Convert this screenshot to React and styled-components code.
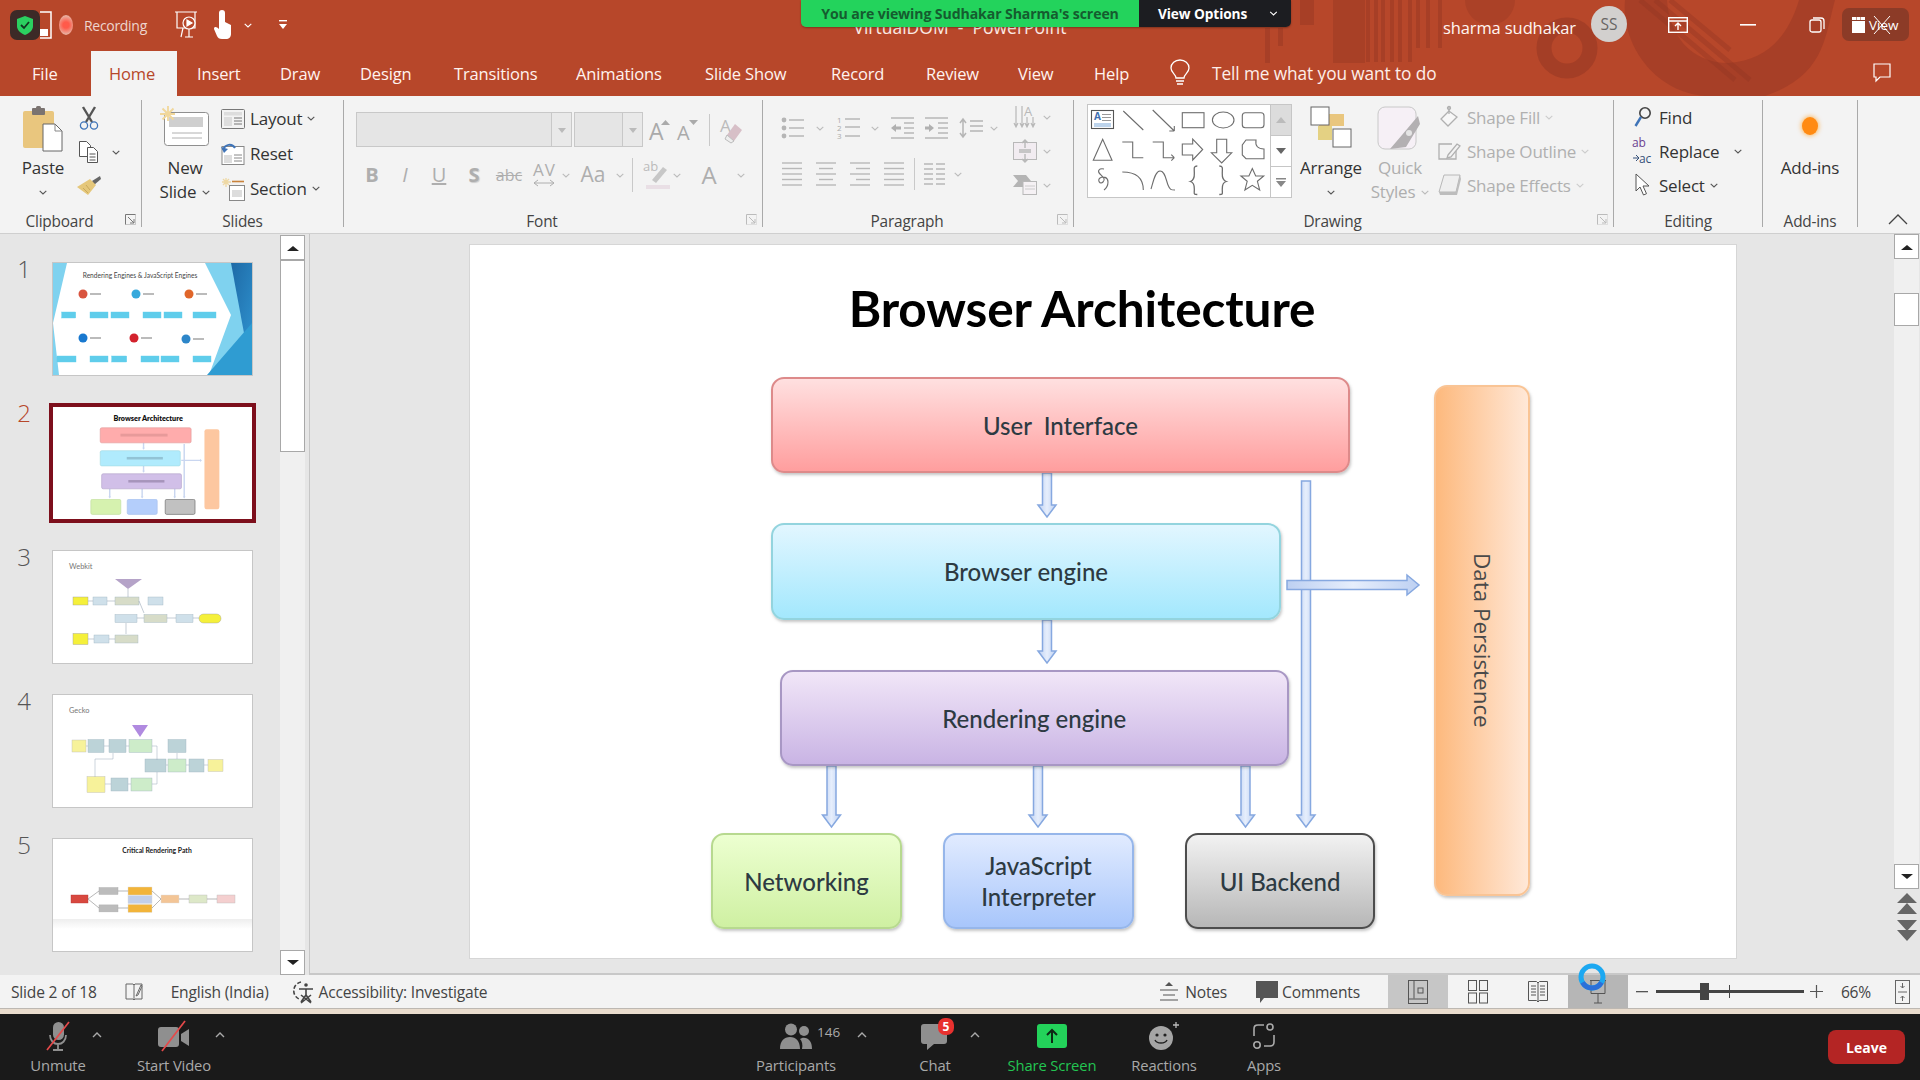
import React from "react";
import styled, { createGlobalStyle } from "styled-components";

const UI = `"Open Sans", "Noto Sans", "Liberation Sans", sans-serif`;
const SLIDE = `Lato, "Open Sans", sans-serif`;

const Global = createGlobalStyle`
  html, body { margin: 0; padding: 0; background: #e6e6e6; overflow: hidden; }
  * { box-sizing: border-box; }
  svg { display: block; overflow: visible; }
`;

const Page = styled.div`
  position: relative; width: 1920px; height: 1080px; display: flex; flex-direction: column;
  font-family: ${UI}; overflow: hidden; color: #333;
`;

/* ---------- title area ---------- */
const Chrome = styled.header`
  position: relative; height: 96px; background: #b7472a; color: #fff; flex: none; overflow: hidden;
`;
const Pattern = styled.svg`position: absolute; left: 0; top: 0;`;
const TitleRow = styled.div`
  position: relative; height: 50px; display: flex; align-items: center;
`;
const QuickAccess = styled.div`display: flex; align-items: center; width: 720px;`;
const DocTitle = styled.div`
  width: 480px; text-align: center; font-size: 17.5px; white-space: pre; padding-top: 4px; color: #fbe9e4;
`;
const Account = styled.div`display: flex; align-items: center; margin-left: auto; height: 50px;`;
const UserName = styled.span`font-size: 16.5px; letter-spacing: -.1px; margin-right: 15px; padding-top: 4px; color: #fff6f2;`;
const Avatar = styled.span`
  width: 36px; height: 36px; border-radius: 50%; background: #d2d0ce; color: #686664; font-size: 15.5px;
  display: flex; align-items: center; justify-content: center; margin-right: 41px; margin-bottom: 2px;
`;
const Recording = styled.span`
  font-size: 14px; letter-spacing: -.3px; color: rgba(255,255,255,.78); margin-left: 11px; width: 60px; margin-right: 31px;
`;
const RecDot = styled.span`
  width: 14px; height: 20px; border-radius: 50%; background: radial-gradient(circle, #ff5a4a 25%, #e9b0a0 75%);
  margin-left: 7px; flex: none;
`;
const TabRow = styled.nav`
  position: relative; height: 46px; display: flex; align-items: flex-end; padding-left: 32px;
`;
const Tab = styled.div`
  height: 45px; width: ${p => p.$w}px; font-size: 16.5px; letter-spacing: -.15px; line-height: 46px; flex: none;
  margin-left: ${p => p.$ml || 0}px; padding-left: ${p => p.$pl || 0}px;
  background: ${p => (p.$active ? "#f3f3f3" : "transparent")};
  color: ${p => (p.$active ? "#b7472a" : "#fff3ef")};
`;
const TellMe = styled.div`
  font-size: 17.3px; letter-spacing: -.1px; line-height: 46px; height: 45px; margin-left: 22px; color: #fdeee9; white-space: nowrap;
`;
const Bulb = styled.svg`align-self: center;`;
const CommentBtn = styled.svg`margin-left: auto; margin-right: 29px; align-self: center;`;

const Banner = styled.div`
  position: absolute; left: 801px; top: 0; height: 27px; width: 490px; display: flex; z-index: 5;
  border-radius: 0 0 5px 5px; overflow: hidden; box-shadow: 0 1px 2px rgba(0,0,0,.3); font-size: 14.1px; font-weight: 700;
`;
const BannerMsg = styled.div`
  width: 338px; background: #23d35c; color: #155c2f; display: flex; align-items: center; justify-content: center; letter-spacing: -.1px; white-space: nowrap;
`;
const BannerOptions = styled.div`
  flex: 1; background: #1c1d21; color: #fff; display: flex; align-items: center; padding-left: 19px; font-size: 13.7px; gap: 22px; letter-spacing: -.1px; white-space: nowrap;
`;
const ShieldBadge = styled.div`
  position: absolute; left: 10px; top: 10px; width: 30px; height: 30px; border-radius: 7px; background: #3d2a27;
  display: flex; align-items: center; justify-content: center; z-index: 5;
`;
const ViewBadge = styled.div`
  position: absolute; left: 1842px; top: 8px; width: 67px; height: 33px; border-radius: 7px; background: rgba(70,40,35,.38);
  display: flex; align-items: center; padding-left: 10px; gap: 4px; font-size: 13.5px; color: #fff; z-index: 5;
`;

/* ---------- ribbon ---------- */
const Ribbon = styled.section`
  height: 138px; flex: none; background: #f3f3f3; border-bottom: 1px solid #cfcfcf; padding-top: 4px; display: flex; align-items: flex-start;
`;
const Group = styled.div`
  width: ${p => p.$w}px; height: 127px; border-right: 1px solid #a9a9a9; display: flex; flex-direction: column; flex: none;
`;
const GroupBody = styled.div`
  height: 111px; display: flex; padding-left: ${p => p.$pl || 0}px; align-items: flex-start;
`;
const GroupFoot = styled.div`height: 16px; display: flex; position: relative; padding-right: ${p => (p.$launcher ? 22 : 0)}px;`;
const GroupLabel = styled.div`
  flex: 1; text-align: center; font-size: 15.4px; letter-spacing: -.2px; line-height: 22px; color: #444; height: 22px;
`;
const Launcher = styled.svg`position: absolute; right: 5px; top: 3px;`;

const BigButton = styled.div`
  width: ${p => p.$w}px; margin-left: ${p => p.$ml || 0}px; display: flex; flex-direction: column; align-items: center; padding-top: 6px;
  color: ${p => (p.$off ? "#aeaeae" : "#333")}; flex: none;
`;
const BigIcon = styled.div`height: 50px; display: flex; align-items: flex-start; justify-content: center;`;
const BigLine = styled.div`
  height: 24px; line-height: 24px; font-size: 17px; letter-spacing: -.2px; display: flex; align-items: center; gap: 6px; white-space: nowrap;
`;
const MiniCol = styled.div`
  display: flex; flex-direction: column; padding-top: ${p => p.$pt || 0}px; margin-left: ${p => p.$ml || 0}px; flex: none;
`;
const MiniRow = styled.div`
  height: ${p => p.$h || 34}px; display: flex; align-items: center; gap: ${p => p.$gap ?? 5}px; font-size: 17px; letter-spacing: -.2px;
  color: ${p => (p.$off ? "#b0b0b0" : "#333")}; white-space: nowrap;
`;
const MiniIcon = styled.span`width: ${p => p.$w || 24}px; display: flex; justify-content: center; flex: none;`;

const FontCol = styled.div`padding-top: 12px; display: flex; flex-direction: column; width: 100%;`;
const FontRowA = styled.div`height: 35px; display: flex; align-items: center;`;
const FontRowB = styled.div`height: 36px; margin-top: 10px; display: flex; align-items: center; color: #aeaeae;`;
const Combo = styled.div`
  width: ${p => p.$w}px; height: 35px; background: #e5e5e5; border: 1px solid #c8c8c8; margin-right: 2px; display: flex; justify-content: flex-end;
`;
const ComboBtn = styled.div`
  width: 20px; border-left: 1px solid #c8c8c8; display: flex; align-items: center; justify-content: center; background: #e9e9e9;
  &::before { content: ""; border: 4px solid transparent; border-top: 5px solid #bbb; margin-top: 5px; }
`;
const FontCell = styled.div`
  width: ${p => p.$w}px; display: flex; justify-content: center; align-items: center; font-size: ${p => p.$fs || 20}px; line-height: 1.3;
  font-weight: ${p => (p.$bold ? 700 : 400)}; font-style: ${p => (p.$italic ? "italic" : "normal")};
  text-decoration: ${p => p.$deco || "none"}; text-shadow: ${p => (p.$shadow ? "1px 1px 1px #ccc" : "none")}; flex: none;
`;
const VRule = styled.div`width: 1px; height: ${p => p.$h}px; background: #c9c9c9; margin: 0 ${p => p.$m || 0}px; flex: none;`;
const ParaCol = styled.div`display: flex; flex-direction: column; padding-top: 10px; flex: none; width: 250px;`;
const ParaRow = styled.div`display: flex; align-items: center; height: 36px; margin-bottom: ${p => p.$mb || 0}px;`;
const ParaIcon = styled.span`
  width: ${p => p.$w}px; margin-left: ${p => p.$ml || 0}px; display: flex; justify-content: center; flex: none;
`;

const Gallery = styled.div`
  width: 205px; height: 94px; margin-top: 4px; margin-left: 13px; background: #fff; border: 1px solid #c6c6c6; display: flex; flex: none;
`;
const GalleryShapes = styled.svg`flex: none;`;
const GalleryScroll = styled.div`width: 22px; border-left: 1px solid #c6c6c6; display: flex; flex-direction: column;`;
const GalleryBtn = styled.div`
  height: 31px; flex: 1; background: ${p => (p.$gray ? "#dcdcdc" : "#fff")}; border-bottom: ${p => (p.$last ? 0 : 1)}px solid #c6c6c6;
  display: flex; align-items: center; justify-content: center;
`;
const Collapse = styled.div`flex: 1; display: flex; justify-content: flex-end; align-items: flex-end; height: 127px; padding: 0 12px 2px 0;`;
const AddinDot = styled.span`
  width: 16px; height: 18px; margin-top: 11px; border-radius: 50%; background: #ff8a12; box-shadow: 0 0 4px 1px rgba(255,170,60,.75);
`;

/* ---------- main ---------- */
const Main = styled.main`
  height: 741px; flex: none; display: flex; background: #e6e6e6; position: relative;
`;
const ThumbPane = styled.div`
  width: 280px; display: flex; flex-direction: column; gap: 32px; padding-top: 29px; flex: none;
`;
const ThumbRow = styled.div`display: flex; height: 112px;`;
const ThumbNum = styled.div`
  width: 53px; padding-right: 5px; text-align: center; font-size: 24px; line-height: 26px; font-weight: 300; margin-top: -7px;
  color: ${p => (p.$sel ? "#b7472a" : "#555")};
`;
const Thumb = styled.div`
  width: 199px; height: 112px; background: #fff; outline: ${p => (p.$sel ? "4px solid #7d0f1c" : "1px solid #c6c6c6")};
  overflow: hidden;
`;
const VScroll = styled.div`
  width: 25px; flex: none; background: #f0f0f0; display: flex; flex-direction: column; margin-top: 1px; height: 740px;
`;
const ScrollBtn = styled.div`
  height: 25px; flex: none; background: #fff; border: 1px solid #a8a8a8; display: flex; align-items: center; justify-content: center;
  &::before {
    content: ""; border: 6px solid transparent;
    ${p => (p.$down ? "border-top: 5px solid #222; margin-top: 5px;" : "border-bottom: 5px solid #222; margin-bottom: 5px;")}
  }
`;
const ScrollThumb = styled.div`
  height: ${p => p.$h}px; margin-top: ${p => p.$mt || 0}px; background: #fff; border: 1px solid #a8a8a8; flex: none;
`;
const ScrollFill = styled.div`flex: 1;`;
const Editor = styled.div`
  flex: 1; display: flex; margin-left: 4px; border-left: 1px solid #c6c6c6; border-bottom: 2px solid #c8c8c8; position: relative;
`;
const SlideArea = styled.div`flex: 1; padding: 10px 0 0 159px;`;
const Slide = styled.div`
  position: relative; width: 1268px; height: 715px; background: #fff; border: 1px solid #d6d6d6; overflow: hidden; color: #333;
`;
const SlideTitle = styled.h1`
  position: absolute; left: 0; width: 1224px; top: 33px; margin: 0; text-align: center; font: 700 49.5px/60px ${SLIDE}; color: #000; letter-spacing: -.1px;
`;
const Node = styled.div`
  position: absolute; left: ${p => p.$x}px; top: ${p => p.$y}px; width: ${p => p.$w}px; height: ${p => p.$h}px;
  border-radius: 13px; border: 2px solid ${p => p.$bd}; background: linear-gradient(${p => p.$dir || "180deg"}, ${p => p.$a}, ${p => p.$b});
  box-shadow: 1px 2px 3px rgba(90,90,90,.35); display: flex; align-items: center; justify-content: center; text-align: center;
  font: 500 24px/31px ${SLIDE}; color: #2d3a42;
`;
const NodeText = styled.span`white-space: pre;`;
const Rotated = styled.span`
  writing-mode: vertical-rl; font: 400 22.4px/1 ${UI}; color: #4a4a4a;
`;
const ArrowLayer = styled.svg`position: absolute; left: 0; top: 0;`;

const RightScroll = styled.div`
  width: 25px; flex: none; margin-right: 1px; display: flex; flex-direction: column; background: #f0f0f0; height: 739px; position: relative;
`;
const NavPager = styled.div`
  background: #e6e6e6; height: 84px; flex: none; display: flex; flex-direction: column; align-items: center; padding-top: 3px; gap: 2px;
`;

/* ---------- status ---------- */
const Status = styled.footer`
  height: 33px; flex: none; background: #f3f3f3; display: flex; align-items: stretch; font-size: 15.6px; letter-spacing: -.2px; color: #444;
`;
const StatusLeft = styled.div`flex: 1; display: flex; align-items: stretch; padding-right: 28px;`;
const StatusText = styled.span`display: flex; align-items: center; margin-left: ${p => p.$ml || 0}px; white-space: nowrap;`;
const StatusIcon = styled.span`display: flex; align-items: center; margin-left: ${p => p.$auto ? "auto" : `${p.$ml || 0}px`};`;
const ViewBtn = styled.div`
  width: 60px; flex: none; display: flex; align-items: center; justify-content: center; background: ${p => p.$bg || "transparent"};
`;
const SliderTrack = styled.div`
  position: relative; width: 148px; height: 3px; background: #444; align-self: center; margin-left: 8px; flex: none;
`;
const SliderKnob = styled.span`
  position: absolute; left: 44px; top: -7px; width: 9px; height: 17px; background: #444;
`;
const SliderTick = styled.span`
  position: absolute; left: 73px; top: -5px; width: 1px; height: 13px; background: #444;
`;
const Strip = styled.div`
  height: 6px; flex: none; background: #e9dccd; border-top: 1px solid #bdb8b2;
`;
const RingWrap = styled.svg`position: absolute; left: 1578px; top: 963px; z-index: 6;`;

/* ---------- meeting bar ---------- */
const MeetBar = styled.div`
  height: 66px; flex: none; background: #1a1a1a; display: flex; align-items: flex-start;
`;
const MeetItem = styled.div`
  position: relative; width: ${p => p.$w}px; margin-left: ${p => p.$ml || 0}px; flex: none; display: flex; flex-direction: column; align-items: center; padding-top: 6px;
`;
const MeetIcon = styled.div`height: 32px; display: flex; align-items: center; justify-content: center;`;
const MeetLabel = styled.div`
  margin-top: 3px; line-height: 20px; font-size: 14.8px; letter-spacing: -.15px; white-space: nowrap; color: ${p => (p.$green ? "#23c552" : "#a9a9a9")};
`;
const Caret = styled.svg`margin-left: ${p => p.$ml || 0}px; margin-top: 18px; flex: none;`;
const Count = styled.span`position: absolute; left: 71px; top: 9px; font-size: 13.5px; color: #aaa;`;
const ChatBadge = styled.span`
  position: absolute; left: 33px; top: 4px; width: 16px; height: 17px; border-radius: 7px; background: #e8312f; color: #fff; font-size: 12px; font-weight: 700;
  display: flex; align-items: center; justify-content: center;
`;
const LeaveBtn = styled.div`
  margin: 16px 15px 0 auto; width: 77px; height: 34px; border-radius: 8px; background: #b42524; color: #fff; font-weight: 700; font-size: 14px;
  display: flex; align-items: center; justify-content: center;
`;

/* ---------- icons ---------- */
const Chevron = ({ c = "#555", w = 8 }) => (
  <svg width={w} height="5" viewBox="0 0 8 5"><path d="M.7.8 4 4l3.3-3.2" fill="none" stroke={c} strokeWidth="1.1" /></svg>
);
const LauncherIcon = ({ c = "#777" }) => (
  <Launcher width="11" height="11" viewBox="0 0 11 11"><path d="M.5 10.5V.5h10M3 3l6 6M9 5v4H5" fill="none" stroke={c} /><path d="M10.5 .5v10h-10" fill="none" stroke={c} opacity=".35" /></Launcher>
);
const PasteIcon = () => (
  <svg width="42" height="46" viewBox="0 0 42 46">
    <rect x="1" y="5" width="31" height="37" rx="2" fill="#e9c67e" />
    <rect x="10" y="2" width="13" height="7" rx="1" fill="#7a7370" /><rect x="14" y="0" width="5" height="4" rx="1.5" fill="#7a7370" />
    <path d="M21 18h12l7 7v20H21z" fill="#fff" stroke="#666" /><path d="M33 18v7h7" fill="none" stroke="#888" />
  </svg>
);
const Scissors = () => (
  <svg width="22" height="24" viewBox="0 0 22 24" fill="none">
    <path d="M5 1l9 15M17 1 8 16" stroke="#555" strokeWidth="2.4" />
    <circle cx="6" cy="19.5" r="3.6" stroke="#3f74b8" strokeWidth="1.3" /><circle cx="16" cy="19.5" r="3.6" stroke="#3f74b8" strokeWidth="1.3" />
  </svg>
);
const CopyIcon = () => (
  <svg width="22" height="24" viewBox="0 0 22 24" fill="#fff" stroke="#555">
    <path d="M1.5 1.5h7l4 4v11h-11z" /><path d="M9.5 7.5h6l4 4v11h-10z" /><path d="M11.5 14h6M11.5 17h6M11.5 20h6" />
  </svg>
);
const BrushIcon = () => (
  <svg width="24" height="20" viewBox="0 0 24 20">
    <path d="M15 5 23 0l1 3-7 6z" fill="#666" /><path d="M13 3 19 9 11 19 0 11z" fill="#e5c77a" /><path d="M6 12l5 5M9 9l4 5" stroke="#c9a95c" />
  </svg>
);
const NewSlideIcon = () => (
  <svg width="50" height="46" viewBox="0 0 50 46">
    <rect x="4.5" y="6.5" width="44" height="33" rx="3" fill="#fff" stroke="#8f8f8f" />
    <rect x="9" y="11" width="34" height="10" fill="#cfcfcf" /><path d="M12 27h30M12 32h30" stroke="#b0b0b0" />
    <path d="M8 0v15M0 8h15M2.5 2.5l11 11M13.5 2.5l-11 11" stroke="#f1d79a" strokeWidth="1.8" />
  </svg>
);
const LayoutIcon = () => (
  <svg width="24" height="20" viewBox="0 0 24 20" fill="none" stroke="#777">
    <rect x=".5" y=".5" width="23" height="19" rx="1" /><rect x="3" y="3" width="18" height="3.5" fill="#ddd" stroke="none" />
    <rect x="3" y="8" width="8" height="9" fill="#ddd" stroke="none" /><path d="M13 9h8M13 12h8M13 15h8" />
  </svg>
);
const ResetIcon = () => (
  <svg width="24" height="22" viewBox="0 0 24 22" fill="none">
    <rect x="1" y="3.5" width="22" height="18" fill="#fff" stroke="#888" /><rect x="3" y="12" width="8" height="8" fill="#ddd" /><path d="M13 12h8M13 15h8M13 18h8" stroke="#888" />
    <path d="M2 7c2-6 9-7 12-2" stroke="#3f74b8" strokeWidth="2" /><path d="M0 4l3 6 4-4z" fill="#3f74b8" />
  </svg>
);
const SectionIcon = () => (
  <svg width="24" height="24" viewBox="0 0 24 24" fill="none">
    <path d="M5 1v9M1 5h9M2 2l6 6M8 2 2 8" stroke="#eed8a4" strokeWidth="1.3" /><path d="M11 4.5h12" stroke="#c9823b" strokeWidth="1.6" />
    <rect x="8.5" y="8.5" width="15" height="15" stroke="#888" fill="#fff" /><rect x="11" y="13" width="10" height="7" fill="#ddd" />
  </svg>
);
const FontGrow = ({ shrink }) => (
  <svg width="22" height="26" viewBox="0 0 22 26">
    <text x="0" y="23" fontFamily={UI} fontSize={shrink ? 20 : 23} fill="#aaa">A</text>
    <path d={shrink ? "M12 3h9l-4.5 5z" : "M12 8h9L16.5 3z"} fill="#aaa" />
  </svg>
);
const ClearFmt = () => (
  <svg width="24" height="30" viewBox="0 0 24 30">
    <text x="1" y="17" fontFamily={UI} fontSize="17" fill="#bbb">A</text>
    <path d="M16 9l7 6-8 11-7-6z" fill="#d7bfc7" /><path d="M8 20l7 6-3 2-6-4z" fill="#eee" stroke="#bbb" />
  </svg>
);
const SpacingIcon = () => (
  <svg width="24" height="28" viewBox="0 0 24 28">
    <text x="1" y="15" fontFamily={UI} fontSize="17" fill="#aeaeae" textLength="22">AV</text>
    <path d="M2 22h20M6 19l-4 3 4 3M18 19l4 3-4 3" fill="none" stroke="#aeaeae" />
  </svg>
);
const HighlightIcon = () => (
  <svg width="28" height="30" viewBox="0 0 28 30">
    <text x="0" y="11" fontFamily={UI} fontSize="13" fill="#bbb">ab</text>
    <path d="M20 7 24 10 13 23 9 20z" fill="#c7c7c7" /><rect x="3" y="25" width="24" height="4" fill="#e9dfe5" />
  </svg>
);
const Lines = ({ w = 22, h = 22, ws = [1, 1, 1, 1, 1], align = "left" }) => {
  const gap = h / (ws.length - 1 || 1);
  return (
    <svg width={w} height={h + 2} viewBox={`0 0 ${w} ${h + 2}`} stroke="#b8b8b8" strokeWidth="1.4">
      {ws.map((f, i) => {
        const len = w * f;
        const x = align === "center" ? (w - len) / 2 : align === "right" ? w - len : 0;
        return <line key={i} x1={x} x2={x + len} y1={1 + i * gap} y2={1 + i * gap} />;
      })}
    </svg>
  );
};
const Bullets = () => (
  <svg width="24" height="22" viewBox="0 0 24 22" stroke="#b8b8b8" strokeWidth="1.4" fill="#b5b5b5">
    <circle cx="3" cy="3" r="2.4" stroke="none" /><circle cx="3" cy="11" r="2.4" stroke="none" /><circle cx="3" cy="19" r="2.4" stroke="none" />
    <path d="M8 3h15M8 11h15M8 19h15" fill="none" />
  </svg>
);
const Numbered = () => (
  <svg width="24" height="24" viewBox="0 0 24 24" stroke="#b8b8b8" strokeWidth="1.4">
    <path d="M9 3h15M9 11h15M9 20h15" fill="none" />
    <g fontFamily={UI} fontSize="8" fill="#aaa" stroke="none"><text x="1" y="7">1</text><text x="1" y="15">2</text><text x="1" y="23">3</text></g>
  </svg>
);
const IndentIcon = ({ dir }) => (
  <svg width="23" height="22" viewBox="0 0 23 22" stroke="#b8b8b8" strokeWidth="1.4">
    <path d="M0 1h23M13 6h10M13 11h10M13 16h10M0 21h23" />
    <path d={dir === "in" ? "M9 11 4 7v2.5H0v3h4V15z" : "M0 11l5-4v2.5h5v3H5V15z"} fill="#b0b0b0" stroke="none" />
  </svg>
);
const LineSpacing = () => (
  <svg width="24" height="24" viewBox="0 0 24 24" stroke="#b5b5b5" strokeWidth="1.5" fill="none">
    <path d="M4 4v16M1 7l3-4 3 4M1 17l3 4 3-4M11 5h13M11 10h13M11 15h13" />
  </svg>
);
const TextDir = () => (
  <svg width="24" height="24" viewBox="0 0 24 24" fill="none" stroke="#b8b8b8" strokeWidth="1.2">
    <path d="M3 1v20M1 18l2 4 2-4M9 1v20M7 18l2 4 2-4M14 12v9M12 18l2 4 2-4M20 12v9M18 18l2 4 2-4" />
    <text x="11" y="11" fontFamily={UI} fontSize="13" fill="#b8b8b8" stroke="none">A</text>
  </svg>
);
const AlignText = () => (
  <svg width="24" height="24" viewBox="0 0 24 24" fill="none" stroke="#b8b8b8">
    <rect x=".5" y="3.5" width="23" height="17" fill="#f2ecf1" /><path d="M12 1v8M9 4l3-3 3 3M12 23v-8M9 20l3 3 3-3M6 11h12M6 13h12" strokeWidth="1.4" />
  </svg>
);
const SmartArt = () => (
  <svg width="24" height="20" viewBox="0 0 24 20">
    <path d="M0 0h13l5 6-5 6H0l5-6z" fill="#b4b4b4" /><rect x="10" y="6.5" width="13.5" height="13" fill="#f5f1f4" stroke="#b8b8b8" /><path d="M12 11h10M12 14h10" stroke="#ccc" />
  </svg>
);
const ArrangeIcon = () => (
  <svg width="42" height="42" viewBox="0 0 42 42">
    <rect x="9" y="8" width="25" height="12" fill="#e9c67e" /><rect x="8" y="20" width="14" height="14" fill="#e4d183" />
    <rect x="1" y="1" width="18" height="18" fill="#fff" stroke="#666" /><rect x="23" y="23" width="18" height="18" fill="#fff" stroke="#666" />
  </svg>
);
const QuickIcon = () => (
  <svg width="46" height="46" viewBox="0 0 46 46">
    <rect x="1" y="1" width="38" height="42" rx="7" fill="#f6f0f6" stroke="#c8c8c8" />
    <path d="M13 43l12-14 16-19 2 8-14 23z" fill="#b3b0b2" /><circle cx="32" cy="27" r="3" fill="#e5e5e5" />
  </svg>
);
const FindIcon = () => (
  <svg width="18" height="22" viewBox="0 0 18 22" fill="none">
    <circle cx="11" cy="7" r="5.2" stroke="#444" strokeWidth="1.6" /><path d="M7 11 1.5 20" stroke="#3f74b8" strokeWidth="2.4" />
  </svg>
);
const ReplaceIcon = () => (
  <svg width="22" height="28" viewBox="0 0 22 28">
    <text x="0" y="10" fontFamily={UI} fontSize="12" fill="#6b3f90">ab</text><text x="7" y="26" fontFamily={UI} fontSize="12" fill="#36517a">ac</text>
    <path d="M1 21h5M4 18l3 3-3 3" stroke="#36517a" fill="none" />
  </svg>
);
const CursorIcon = () => (
  <svg width="18" height="24" viewBox="0 0 18 24"><path d="M2 1v17l4-4 3.5 8 3-1.3L9 13h6z" fill="#fff" stroke="#555" /></svg>
);
const FillIcon = () => (
  <svg width="20" height="22" viewBox="0 0 20 22" fill="none" stroke="#b0b0b0" strokeWidth="1.3">
    <path d="M9 5 1 13l7 7 9-9z" fill="#f7f7f7" /><path d="M9 1v7" /><circle cx="9" cy="2" r="1.5" />
  </svg>
);
const OutlineIcon = () => (
  <svg width="24" height="20" viewBox="0 0 24 20" fill="none" stroke="#b0b0b0" strokeWidth="1.3">
    <path d="M14 3H1v15h17v-8" /><path d="M10 14l9-11 3 2-9 11-4 1z" fill="#f3f3f3" />
  </svg>
);
const EffectsIcon = () => (
  <svg width="24" height="22" viewBox="0 0 24 22">
    <path d="M6 1h16l-4 17H1z" fill="#efefef" stroke="#b8b8b8" /><path d="M1 18h17l4-17 1 4-4 16H2z" fill="#bdbdbd" />
  </svg>
);

const shapesPath = (
  <g fill="none" stroke="#6d6d6d" strokeWidth="1.1">
    <rect x="3.500" y="5.500" width="22" height="18" stroke="#555" /><path d="M14 9.500h9M14 12.500h9M14 15.500h9" stroke="#999" /><path d="M6 19h17M6 21h17" stroke="#7aa8d8" />
    <text x="6" y="14.500" fontFamily={UI} fontSize="10" fontWeight="700" fill="#3f6fb0" stroke="none">A</text>
    <path d="M35.300 6l20 19M64.700 5l21.600 21M86.300 26v-5M86.300 26h-5" />
    <rect x="94.300" y="7.700" width="21.700" height="15" /><ellipse cx="135.200" cy="15" rx="10.800" ry="8" /><rect x="154.300" y="7.700" width="21.700" height="15" rx="3" />
    <path d="M14.700 34.300 5.300 55.300H24z" />
    <path d="M34.300 37h10.400v15.700h10.600" />
    <path d="M64.700 37h10.600v15.700h11M86.300 52.700l-3-3M86.300 52.700l-3 3" />
    <path d="M94.300 39h10.400v-5l10 10.500-10 10.500v-5H94.300z" />
    <path d="M128.700 34.300h10v13.500h5l-10 10.200-10.300-10.200h5.300z" />
    <path d="M158 35h10c-1 6 2 9 8 9v9.700h-18l-3.700-3.700V40z" />
    <path d="M16 64c-5-1-7 2-4 5s6 5 3 8-6-2-3-4 8-1 8 4-4 8-4 8" />
    <path d="M34.300 67c12 0 21 5 21 18M63 84c2-6 4-18 9-18s6 9 8 14 3 5 7 5" />
    <path d="M109.300 64c-4 0-3 3-3 6s1 8-4 9.500c5 1.500 4 6 4 9s-1 4 3 4M131.300 64c4 0 3 3 3 6s-1 8 4 9.500c-5 1.500-4 6-4 9s1 4-3 4" transform="translate(0 -3)" strokeWidth="1.3" />
    <path d="M164.300 63.500l3.400 7.500h8l-6.300 5.300 2.300 8.700-7.400-4.700-7.400 4.700 2.300-8.700-6.300-5.300h8z" />
  </g>
);

const Pager = () => (
  <>
    <svg width="20" height="24" viewBox="0 0 20 24" fill="#666"><path d="M10 1 20 11H0zM10 11l10 11H0z" /></svg>
    <svg width="20" height="24" viewBox="0 0 20 24" fill="#666"><path d="M0 2h20L10 13zM0 12h20L10 23z" /></svg>
  </>
);

/* ---------- data ---------- */
const nodes = [
  { t: "User  Interface", x: 301, y: 132, w: 579, h: 96, a: "#ffe0e0", b: "#ff9e9e", bd: "#dd8a8a" },
  { t: "Browser engine", x: 301, y: 278, w: 510, h: 97, a: "#e2f6ff", b: "#a3e8fd", bd: "#93d4de" },
  { t: "Rendering engine", x: 310, y: 425, w: 508.5, h: 96, a: "#f1e6f8", b: "#c9b4e4", bd: "#a897c4" },
  { t: "Networking", x: 241, y: 588, w: 191, h: 96, a: "#ecffd0", b: "#cff0a2", bd: "#b7d98f" },
  { t: "JavaScript\nInterpreter", x: 473, y: 588, w: 191, h: 96, a: "#e1ebff", b: "#a8c6fb", bd: "#96b6ea" },
  { t: "UI Backend", x: 715, y: 588, w: 190, h: 96, a: "#f2f2f2", b: "#b7b7b7", bd: "#4d4d4d" },
];
const vArrow = (x, y1, y2) =>
  `${x - 4.5},${y1} ${x + 4.5},${y1} ${x + 4.5},${y2 - 12} ${x + 9},${y2 - 12} ${x},${y2} ${x - 9},${y2 - 12} ${x - 4.5},${y2 - 12}`;
const hArrow = (x1, x2, y) =>
  `${x1},${y - 4.5} ${x2 - 12},${y - 4.5} ${x2 - 12},${y - 10} ${x2},${y} ${x2 - 12},${y + 10} ${x2 - 12},${y + 4.5} ${x1},${y + 4.5}`;
const arrows = [
  vArrow(577, 228, 272), vArrow(577, 375, 418), vArrow(361.5, 521, 582), vArrow(568, 521, 582), vArrow(775.5, 521, 582),
  vArrow(836, 236, 582), hArrow(817, 949, 340),
];

const Mini = ({ x, y, w, h = 8, c = "#cfe0ea", s = "#9fb4c0" }) => (
  <rect x={x} y={y - h / 2} width={w} height={h} fill={c} stroke={s} strokeWidth=".4" />
);

const Thumb1 = () => (
  <svg width="199" height="112" viewBox="0 0 199 112">
    <defs><linearGradient id="tb1" x1="0" x2="1" y1="0" y2="1"><stop offset="0" stopColor="#1e6aa6" /><stop offset="1" stopColor="#2d8ecb" /></linearGradient></defs>
    <path d="M0 0h14L0 60 6 112H0z" fill="#7fd2ef" /><path d="M152 0h47v112h-43l22-60z" fill="#7fd2ef" /><path d="M178 0h21v70h-8z" fill="url(#tb1)" /><path d="M199 60v52h-45z" fill="#2f9cd2" />
    <text x="87" y="15" textAnchor="middle" fontFamily={SLIDE} fontSize="6.6" fill="#444">Rendering Engines &amp; JavaScript Engines</text>
    {[[30, 31, "#d9543f"], [83, 31, "#36a9dc"], [136, 31, "#e0662a"], [30, 75, "#1878cf"], [81, 75, "#d3222d"], [133, 76, "#2d86c9"]].map(([x, y, c]) => (
      <g key={x}><circle cx={x} cy={y} r="4.5" fill={c} /><rect x={x + 7} y={y - 1} width="11" height="2" fill="#bbb" /></g>
    ))}
    {[[8.7, 14], [37, 18], [58, 18], [90, 18], [111, 18], [140, 23]].map(([x, w]) => <Mini key={x} x={x} y={52} w={w} h={6} c="#5fcdeb" s="#5fcdeb" />)}
    {[[4, 19], [37, 18], [58.7, 15], [88, 18], [108, 18], [140, 18]].map(([x, w]) => <Mini key={x} x={x} y={96} w={w} h={6} c="#5fcdeb" s="#5fcdeb" />)}
  </svg>
);
const Thumb2 = () => (
  <svg width="199" height="112" viewBox="0 0 1268 713">
    <text x="606" y="90" textAnchor="middle" fontFamily={SLIDE} fontWeight="800" fontSize="46" fill="#111">Browser Architecture</text>
    {arrows.map((p, i) => <polygon key={i} points={p} fill="#c9d6f0" />)}
    {nodes.map(n => <rect key={n.t} x={n.x} y={n.y} width={n.w} height={n.h} rx="10" fill={n.b} stroke={n.bd} strokeWidth="4" opacity=".85" />)}
    <rect x="965" y="141" width="95" height="510" rx="14" fill="#fdc7a0" />
    <rect x="430" y="170" width="300" height="18" fill="#b77" opacity=".35" /><rect x="470" y="318" width="230" height="16" fill="#689" opacity=".4" /><rect x="480" y="465" width="230" height="16" fill="#657" opacity=".4" />
  </svg>
);
const Thumb3 = () => (
  <svg width="199" height="112" viewBox="0 0 199 112">
    <text x="16" y="18" fontFamily={SLIDE} fontSize="7.4" fill="#777">Webkit</text>
    <path d="M62 28h27L75 38z" fill="#b5a3c8" />
    <Mini x={20} y={50} w={15} c="#f5f03a" s="#999" /><Mini x={40} y={50} w={14} /><Mini x={62} y={50} w={24} c="#d7dcc8" /><Mini x={95} y={50} w={15} />
    <Mini x={62} y={67.500} w={22} /><Mini x={91} y={67.500} w={23} c="#d7dcc8" /><Mini x={123} y={67.500} w={17} /><rect x="146" y="63" width="22" height="9" rx="4.500" fill="#f5f03a" stroke="#999" strokeWidth=".4" />
    <Mini x={20} y={88} w={15} h={11} c="#f5f03a" s="#999" /><Mini x={41} y={88} w={15} /><Mini x={62} y={88} w={23} c="#d7dcc8" />
    <path d="M35 50h5M54 50h8M75 38v8M86 50l5 12M84 67h7M114 67h9M140 67h6M35 88h6M56 88h6M73 72v11" stroke="#89a" strokeWidth=".5" />
  </svg>
);
const Thumb4 = () => (
  <svg width="199" height="112" viewBox="0 0 199 112">
    <text x="16" y="18" fontFamily={SLIDE} fontSize="7.4" fill="#777">Gecko</text>
    <path d="M79 30h16l-8 12z" fill="#b08ae0" />
    <Mini x={19} y={51} w={14} h={12} c="#f7f29a" s="#bbb" /><Mini x={35} y={51} w={16} h={13} c="#bcd3d8" /><Mini x={56} y={51} w={17} h={13} c="#bcd3d8" /><Mini x={76} y={51} w={23} h={13} c="#cdecc9" /><Mini x={115} y={51} w={18} h={13} c="#bcd3d8" />
    <Mini x={92} y={70.500} w={21} h={13} c="#bcd3d8" /><Mini x={115} y={70.500} w={18} h={13} c="#cdecc9" /><Mini x={136} y={70.500} w={15} h={13} c="#bcd3d8" /><Mini x={155} y={70.500} w={15} h={12} c="#f7f29a" s="#bbb" />
    <Mini x={34} y={89.500} w={18} h={16} c="#f7f29a" s="#bbb" /><Mini x={58} y={89.500} w={17} h={13} c="#bcd3d8" /><Mini x={78} y={89.500} w={21} h={13} c="#cdecc9" />
    <path d="M33 51h2M51 51h5M73 51h3M99 51h5v14M124 58v6M113 70h2M133 70h3M151 70h4M52 89h6M75 89h3M99 89h5v-12M60 58v6H42v18" stroke="#9ab" strokeWidth=".5" fill="none" />
  </svg>
);
const Thumb5 = () => (
  <svg width="199" height="112" viewBox="0 0 199 112">
    <defs><linearGradient id="tb5" x1="0" x2="0" y1="0" y2="1"><stop offset="0" stopColor="#eee" /><stop offset="1" stopColor="#fff" /></linearGradient></defs>
    <rect x="0" y="80" width="199" height="10" fill="url(#tb5)" />
    <text x="104" y="14" textAnchor="middle" fontFamily={SLIDE} fontWeight="700" fontSize="6.8" fill="#222">Critical Rendering Path</text>
    <Mini x={18} y={60} w={17} c="#d8483f" s="#b33" /><Mini x={46} y={52} w={19} h={7} c="#bcbcbc" s="#aaa" /><Mini x={46} y={69.400} w={19} h={7} c="#bcbcbc" s="#aaa" />
    <Mini x={75} y={52} w={24} c="#f2b43a" s="#ddd" /><Mini x={75} y={60.500} w={24} c="#c2cfe9" s="#ddd" /><Mini x={75} y={69.400} w={24} c="#f2b43a" s="#ddd" />
    <Mini x={108} y={60} w={18} c="#f3c596" s="#ddd" /><Mini x={136} y={60} w={18} c="#dde8c8" s="#bbb" /><Mini x={164} y={60} w={18} c="#f4cfcf" s="#bbb" />
    <path d="M35 60 46 52M35 60l11 9M65 52h10M65 69h10M99 52l9 8M99 69l9-9M126 60h10M154 60h10" stroke="#888" strokeWidth=".6" />
  </svg>
);

const tabs = [["Insert", 83], ["Draw", 80], ["Design", 94], ["Transitions", 122], ["Animations", 129], ["Slide Show", 126], ["Record", 95], ["Review", 92], ["View", 76], ["Help", 76]];
const thumbs = [Thumb1, Thumb2, Thumb3, Thumb4, Thumb5];
const CaretUp = ({ ml }) => (
  <Caret $ml={ml} width="10" height="6" viewBox="0 0 10 6"><path d="M1 5 5 1l4 4" fill="none" stroke="#aaa" strokeWidth="1.4" /></Caret>
);

export default function App() {
  return (
    <Page>
      <Global />
      <Chrome>
        <Pattern width="1920" height="96" viewBox="0 0 1920 96">
          <g fill="#8e3321" opacity=".38">
            <rect x="1333" y="0" width="32" height="63" opacity=".9" />
            {[0, 8, 15, 24, 32, 42, 50, 60, 72].map((d, i) => <rect key={d} x={1366 + d} y="0" width="4" height={i < 6 ? 62 : 48} />)}
            <rect x="1265" y="28" width="5" height="35" /><rect x="1278" y="28" width="5" height="18" />
            <rect x="1300" y="0" width="14" height="25" />
            <circle cx="1490" cy="0" r="25" opacity=".75" />
          </g>
          <circle cx="1567" cy="48" r="23" fill="none" stroke="#8e3321" strokeOpacity=".45" strokeWidth="15" />
          <path d="M1625 0c-4 45 30 92 80 96h60c60-20 60-60 70-96h-36c-12 40-35 60-70 63-40 0-60-30-62-63z" fill="#8e3321" opacity=".38" />
          <g stroke="#8e3321" strokeOpacity=".35" strokeWidth="5">
            <path d="M1640 0l95 80M1655 0l95 80M1670 0l60 50" />
          </g>
        </Pattern>
        <TitleRow>
          <QuickAccess>
            <svg style={{ marginLeft: 40 }} width="12" height="28" viewBox="0 0 12 28" fill="none" stroke="#fff" strokeWidth="1.500"><path d="M0 1h11v26H0" /><rect x="0" y="18" width="8" height="7" fill="#fff" stroke="none" /></svg>
            <RecDot />
            <Recording>Recording</Recording>
            <svg width="22" height="30" viewBox="0 0 22 30" fill="none" stroke="#fff" strokeWidth="1.2">
              <path d="M0 2h22M2 2v16h18V2" /><circle cx="14" cy="13" r="6" fill="#b7472a" /><path d="M12 10v6l5-3z" fill="#fff" /><path d="M8 18l-2 9M14 19v8M10 27h8" />
            </svg>
            <svg style={{ marginLeft: 16 }} width="18" height="30" viewBox="0 0 18 30" fill="#fff">
              <path d="M6 3a3 3 0 0 1 6 0v9l6 3v9c0 3-2 5-5 5H9c-3 0-4-1-5-3l-3-7c0-3 3-2 5 0z" />
            </svg>
            <span style={{ marginLeft: 13 }}><Chevron c="#fff" /></span>
            <svg style={{ marginLeft: 26 }} width="10" height="12" viewBox="0 0 10 12" fill="#fff"><rect x="1" y="1" width="8" height="1.4" /><path d="M1 5h8L5 10z" /></svg>
          </QuickAccess>
          <DocTitle>VirtualDOM  -  PowerPoint</DocTitle>
          <Account>
            <UserName>sharma sudhakar</UserName>
            <Avatar>SS</Avatar>
            <svg width="20" height="16" viewBox="0 0 20 16" fill="none" stroke="#fff" strokeWidth="1.4"><rect x=".7" y=".7" width="18.600" height="14.600" /><path d="M1 4h18M10 13V6M7 9l3-3 3 3" /></svg>
            <svg style={{ marginLeft: 52 }} width="16" height="2" viewBox="0 0 16 2"><rect width="16" height="1.600" fill="#fff" /></svg>
            <svg style={{ marginLeft: 53, marginRight: 95 }} width="16" height="16" viewBox="0 0 16 16" fill="none" stroke="#fff" strokeWidth="1.3"><rect x="1" y="3" width="11" height="12" rx="2" /><path d="M4 1h8c2 0 3 1 3 3v8" /></svg>
          </Account>
        </TitleRow>
        <TabRow>
          <Tab $w={25}>File</Tab>
          <Tab $w={86} $ml={34} $pl={18} $active>Home</Tab>
          <Tab $w={0} $ml={20} />
          {tabs.map(([t, w]) => <Tab key={t} $w={w}>{t}</Tab>)}
          <Bulb width="20" height="26" viewBox="0 0 20 26" fill="none" stroke="#fff" strokeWidth="1.3"><path d="M6 18c0-4-5-5-5-10a9 8 0 0 1 18 0c0 5-5 6-5 10zM6 21h8M7 24h6" /></Bulb>
          <TellMe>Tell me what you want to do</TellMe>
          <CommentBtn width="18" height="20" viewBox="0 0 18 20" fill="none" stroke="#fff" strokeWidth="1.2"><path d="M1 1h16v13H7l-4 4v-4H1z" /></CommentBtn>
        </TabRow>
      </Chrome>

      <Ribbon>
        <Group $w={142}>
          <GroupBody $pl={20}>
            <BigButton $w={46}><BigIcon><PasteIcon /></BigIcon><BigLine>Paste</BigLine><BigLine><Chevron /></BigLine></BigButton>
            <MiniCol $ml={12} $pt={1}>
              <MiniRow><MiniIcon $w={22}><Scissors /></MiniIcon></MiniRow>
              <MiniRow $gap={12}><MiniIcon $w={22}><CopyIcon /></MiniIcon><Chevron /></MiniRow>
              <MiniRow><MiniIcon $w={22}><BrushIcon /></MiniIcon></MiniRow>
            </MiniCol>
          </GroupBody>
          <GroupFoot $launcher><GroupLabel>Clipboard</GroupLabel><LauncherIcon /></GroupFoot>
        </Group>
        <Group $w={202}>
          <GroupBody>
            <BigButton $w={70} $ml={8}><BigIcon><NewSlideIcon /></BigIcon><BigLine>New</BigLine><BigLine>Slide <Chevron /></BigLine></BigButton>
            <MiniCol $ml={1} $pt={1}>
              <MiniRow $h={35}><MiniIcon><LayoutIcon /></MiniIcon>Layout <Chevron /></MiniRow>
              <MiniRow $h={35}><MiniIcon><ResetIcon /></MiniIcon>Reset</MiniRow>
              <MiniRow $h={35}><MiniIcon><SectionIcon /></MiniIcon>Section <Chevron /></MiniRow>
            </MiniCol>
          </GroupBody>
          <GroupFoot><GroupLabel>Slides</GroupLabel></GroupFoot>
        </Group>
        <Group $w={419}>
          <GroupBody $pl={12}>
            <FontCol>
              <FontRowA>
                <Combo $w={216}><ComboBtn /></Combo><Combo $w={69}><ComboBtn /></Combo>
                <FontCell $w={30}><FontGrow /></FontCell><FontCell $w={26}><FontGrow shrink /></FontCell>
                <VRule $h={32} $m={8} /><FontCell $w={26}><ClearFmt /></FontCell>
              </FontRowA>
              <FontRowB>
                <FontCell $w={32} $bold>B</FontCell>
                <FontCell $w={34} $italic>I</FontCell>
                <FontCell $w={34} $deco="underline">U</FontCell>
                <FontCell $w={36} $bold $shadow>S</FontCell>
                <FontCell $w={34} $fs={16} $deco="line-through">abc</FontCell>
                <FontCell $w={36}><SpacingIcon /></FontCell>
                <Chevron c="#bbb" />
                <FontCell $w={46} $fs={21}>Aa</FontCell>
                <Chevron c="#bbb" />
                <VRule $h={34} $m={8} />
                <FontCell $w={32}><HighlightIcon /></FontCell>
                <Chevron c="#bbb" />
                <FontCell $w={56} $fs={24}>A</FontCell>
                <Chevron c="#bbb" />
              </FontRowB>
            </FontCol>
          </GroupBody>
          <GroupFoot $launcher><GroupLabel>Font</GroupLabel><LauncherIcon c="#bbb" /></GroupFoot>
        </Group>
        <Group $w={311}>
          <GroupBody>
            <ParaCol>
              <ParaRow $mb={10}>
                <ParaIcon $w={24} $ml={18}><Bullets /></ParaIcon><ParaIcon $w={15} $ml={7}><Chevron c="#bbb" /></ParaIcon>
                <ParaIcon $w={24} $ml={9}><Numbered /></ParaIcon><ParaIcon $w={15} $ml={7}><Chevron c="#bbb" /></ParaIcon>
                <ParaIcon $w={23} $ml={9}><IndentIcon /></ParaIcon><ParaIcon $w={23} $ml={11}><IndentIcon dir="in" /></ParaIcon>
                <ParaIcon $w={24} $ml={11}><LineSpacing /></ParaIcon><ParaIcon $w={10} $ml={6}><Chevron c="#bbb" /></ParaIcon>
              </ParaRow>
              <ParaRow>
                <ParaIcon $w={20} $ml={19}><Lines w={20} /></ParaIcon>
                <ParaIcon $w={20} $ml={14}><Lines w={20} ws={[1, .7, 1, .7, 1]} align="center" /></ParaIcon>
                <ParaIcon $w={20} $ml={14}><Lines w={20} ws={[1, .7, 1, .7, 1]} align="right" /></ParaIcon>
                <ParaIcon $w={20} $ml={14}><Lines w={20} /></ParaIcon>
                <VRule $h={32} $m={9.5} />
                <ParaIcon $w={21}><svg width="21" height="22" viewBox="0 0 21 22" stroke="#b8b8b8" strokeWidth="1.3"><path d="M0 1h9M12 1h9M0 6h9M12 6h9M0 11h9M12 11h9M0 16h9M12 16h9M0 21h9M12 21h9" /></svg></ParaIcon>
                <ParaIcon $w={10} $ml={8}><Chevron c="#bbb" /></ParaIcon>
              </ParaRow>
            </ParaCol>
            <MiniCol>
              <MiniRow $gap={6}><MiniIcon $w={24}><TextDir /></MiniIcon><Chevron c="#bbb" /></MiniRow>
              <MiniRow $gap={6}><MiniIcon $w={24}><AlignText /></MiniIcon><Chevron c="#bbb" /></MiniRow>
              <MiniRow $gap={6}><MiniIcon $w={24}><SmartArt /></MiniIcon><Chevron c="#bbb" /></MiniRow>
            </MiniCol>
          </GroupBody>
          <GroupFoot $launcher><GroupLabel>Paragraph</GroupLabel><LauncherIcon c="#bbb" /></GroupFoot>
        </Group>
        <Group $w={540}>
          <GroupBody>
            <Gallery>
              <GalleryShapes width="182" height="92" viewBox="0 0 182 92">{shapesPath}</GalleryShapes>
              <GalleryScroll>
                <GalleryBtn $gray><svg width="10" height="6" viewBox="0 0 10 6"><path d="M5 0l5 6H0z" fill="#bbb" /></svg></GalleryBtn>
                <GalleryBtn><svg width="10" height="6" viewBox="0 0 10 6"><path d="M0 0h10L5 6z" fill="#666" /></svg></GalleryBtn>
                <GalleryBtn $last><svg width="10" height="9" viewBox="0 0 10 9"><path d="M0 0h10v1.500H0zM0 3h10L5 9z" fill="#888" /></svg></GalleryBtn>
              </GalleryScroll>
            </Gallery>
            <BigButton $w={74} $ml={2}><BigIcon><ArrangeIcon /></BigIcon><BigLine>Arrange</BigLine><BigLine><Chevron /></BigLine></BigButton>
            <BigButton $w={70} $ml={-3} $off><BigIcon><QuickIcon /></BigIcon><BigLine>Quick</BigLine><BigLine>Styles <Chevron c="#bbb" /></BigLine></BigButton>
            <MiniCol $ml={3}>
              <MiniRow $off><MiniIcon $w={24}><FillIcon /></MiniIcon>Shape Fill <Chevron c="#ccc" /></MiniRow>
              <MiniRow $off><MiniIcon $w={24}><OutlineIcon /></MiniIcon>Shape Outline <Chevron c="#ccc" /></MiniRow>
              <MiniRow $off><MiniIcon $w={24}><EffectsIcon /></MiniIcon>Shape Effects <Chevron c="#ccc" /></MiniRow>
            </MiniCol>
          </GroupBody>
          <GroupFoot $launcher><GroupLabel>Drawing</GroupLabel><LauncherIcon c="#bbb" /></GroupFoot>
        </Group>
        <Group $w={149}>
          <GroupBody $pl={18}>
            <MiniCol>
              <MiniRow><MiniIcon $w={22}><FindIcon /></MiniIcon>Find</MiniRow>
              <MiniRow><MiniIcon $w={22}><ReplaceIcon /></MiniIcon>Replace <span style={{ marginLeft: 10 }}><Chevron /></span></MiniRow>
              <MiniRow><MiniIcon $w={22}><CursorIcon /></MiniIcon>Select <Chevron /></MiniRow>
            </MiniCol>
          </GroupBody>
          <GroupFoot><GroupLabel>Editing</GroupLabel></GroupFoot>
        </Group>
        <Group $w={95}>
          <GroupBody>
            <BigButton $w={94}><BigIcon><AddinDot /></BigIcon><BigLine>Add-ins</BigLine></BigButton>
          </GroupBody>
          <GroupFoot><GroupLabel>Add-ins</GroupLabel></GroupFoot>
        </Group>
        <Collapse><svg width="20" height="11" viewBox="0 0 20 11"><path d="M1 10 10 1l9 9" fill="none" stroke="#444" strokeWidth="1.3" /></svg></Collapse>
      </Ribbon>

      <Main>
        <ThumbPane>
          {thumbs.map((T, i) => (
            <ThumbRow key={i}>
              <ThumbNum $sel={i === 1}>{i + 1}</ThumbNum>
              <Thumb $sel={i === 1}><T /></Thumb>
            </ThumbRow>
          ))}
        </ThumbPane>
        <VScroll>
          <ScrollBtn />
          <ScrollThumb $h={192} />
          <ScrollFill />
          <ScrollBtn $down />
        </VScroll>
        <Editor>
          <SlideArea>
            <Slide>
              <SlideTitle>Browser Architecture</SlideTitle>
              <ArrowLayer width="1268" height="713" viewBox="0 0 1268 713">
                <defs><linearGradient id="arr" x1="0" x2="1"><stop offset="0" stopColor="#bdd0f2" /><stop offset=".5" stopColor="#e6eefc" /><stop offset="1" stopColor="#bdd0f2" /></linearGradient></defs>
                {arrows.map((p, i) => <polygon key={i} points={p} fill="url(#arr)" stroke="#86a8e0" strokeWidth="1.500" />)}
              </ArrowLayer>
              {nodes.map(n => (
                <Node key={n.t} $x={n.x} $y={n.y} $w={n.w} $h={n.h} $a={n.a} $b={n.b} $bd={n.bd}>
                  <NodeText>{n.t}</NodeText>
                </Node>
              ))}
              <Node $x={964} $y={140} $w={96} $h={511} $a="#fdb97d" $b="#ffe8d8" $bd="#f9c495" $dir="90deg"><Rotated>Data Persistence</Rotated></Node>
            </Slide>
          </SlideArea>
          <RightScroll>
            <ScrollBtn />
            <ScrollThumb $h={33} $mt={34} />
            <ScrollFill />
            <ScrollBtn $down />
            <NavPager><Pager /></NavPager>
          </RightScroll>
        </Editor>
      </Main>

      <Status>
        <StatusLeft>
          <StatusText $ml={11}>Slide 2 of 18</StatusText>
          <StatusIcon $ml={28}><svg width="18" height="20" viewBox="0 0 18 20" fill="none" stroke="#666"><path d="M1 2h7l1 1 1-1h7v15h-7l-1 1-1-1H1zM9 3v14" /><path d="M16 3l-4 9-1 2 2-1 4-9z" fill="#fff" /></svg></StatusIcon>
          <StatusText $ml={28}>English (India)</StatusText>
          <StatusIcon $ml={24}><svg width="22" height="24" viewBox="0 0 22 24" fill="none" stroke="#444" strokeWidth="1.6"><path d="M8 2a9 9 0 0 0-2 17" strokeDasharray="4 2" /><circle cx="13" cy="5" r="1.800" fill="#444" stroke="none" /><path d="M6 9h14M13 9v6M8 22l5-7 5 7M8 15l10 8M18 15 8 23" /></svg></StatusIcon>
          <StatusText $ml={4}>Accessibility: Investigate</StatusText>
          <StatusIcon $auto><svg width="18" height="20" viewBox="0 0 18 20" fill="none" stroke="#555" strokeWidth="1.200"><path d="M5 4h8L9 0z" fill="#555" stroke="none" /><path d="M0 8h18M3 13h12M0 18h18" /></svg></StatusIcon>
          <StatusText $ml={7}>Notes</StatusText>
          <StatusIcon $ml={29}><svg width="22" height="24" viewBox="0 0 22 24" fill="#555"><path d="M0 1h22v17H8l-4 5v-5H0z" /></svg></StatusIcon>
          <StatusText $ml={4}>Comments</StatusText>
        </StatusLeft>
        <ViewBtn $bg="#c6c6c6"><svg width="20" height="24" viewBox="0 0 20 24" fill="none" stroke="#555"><rect x=".5" y=".5" width="19" height="23" /><path d="M.5 19h19M6 .5v18" /><rect x="10" y="8" width="5" height="5" /></svg></ViewBtn>
        <ViewBtn><svg width="20" height="24" viewBox="0 0 20 24" fill="none" stroke="#555"><rect x=".5" y=".5" width="8" height="10" /><rect x="11.500" y=".5" width="8" height="10" /><rect x=".5" y="13" width="8" height="10" /><rect x="11.500" y="13" width="8" height="10" /></svg></ViewBtn>
        <ViewBtn><svg width="20" height="24" viewBox="0 0 20 24" fill="none" stroke="#555"><path d="M.5 1.500h8L10 3l1.500-1.500h8v19h-8L10 22l-1.500-1.500h-8zM10 3v19M3 6h5M3 9h5M3 12h5M3 15h5M12 6h5M12 9h5M12 12h5M12 15h5" /></svg></ViewBtn>
        <ViewBtn $bg="#b6b6b6"><svg width="20" height="24" viewBox="0 0 20 24" fill="none" stroke="#555"><path d="M2 .5h16M3 .5v13h14V.5M10 13.500V23M6 23h8" /></svg></ViewBtn>
        <StatusIcon $ml={8}><svg width="12" height="2" viewBox="0 0 12 2"><rect width="12" height="1.300" fill="#555" /></svg></StatusIcon>
        <SliderTrack><SliderKnob /><SliderTick /></SliderTrack>
        <StatusIcon $ml={6}><svg width="13" height="13" viewBox="0 0 13 13" stroke="#555" strokeWidth="1.200"><path d="M0 6.500h13M6.500 0v13" /></svg></StatusIcon>
        <StatusText $ml={18}>66%</StatusText>
        <StatusIcon $ml={24}><svg style={{ marginRight: 10 }} width="15" height="24" viewBox="0 0 15 24" fill="none" stroke="#666"><rect x=".5" y=".5" width="14" height="23" /><path d="M7.500 3v5M5.500 6l2 2 2-2M7.500 21v-5M5.500 18l2-2 2 2M3 12h9" /></svg></StatusIcon>
      </Status>
      <Strip />

      <MeetBar>
        <MeetItem $w={68} $ml={24}>
          <MeetIcon><svg width="32" height="32" viewBox="0 0 32 32" fill="none"><rect x="11" y="2" width="11" height="18" rx="5.500" fill="#8f8f8f" /><path d="M8 15c0 6 4 9 8 9s8-3 8-9M16 24v5M11 30h10" stroke="#8f8f8f" strokeWidth="1.800" /><path d="M5 30 27 2" stroke="#e5494a" strokeWidth="1.700" /></svg></MeetIcon>
          <MeetLabel>Unmute</MeetLabel>
        </MeetItem>
        <CaretUp />
        <MeetItem $w={80} $ml={32}>
          <MeetIcon><svg width="34" height="32" viewBox="0 0 34 32"><rect x="1" y="7" width="21" height="20" rx="3" fill="#8f8f8f" /><path d="M24 14l8-5v17l-8-5z" fill="#8f8f8f" /><path d="M5 31 28 1" stroke="#e5494a" strokeWidth="1.700" /></svg></MeetIcon>
          <MeetLabel>Start Video</MeetLabel>
        </MeetItem>
        <CaretUp ml={1} />
        <MeetItem $w={100} $ml={521}>
          <MeetIcon><svg width="32" height="26" viewBox="0 0 32 26" fill="#8f8f8f"><circle cx="11" cy="6.500" r="6" /><circle cx="24" cy="8" r="5" /><path d="M0 26c0-8 4-12 10-12s10 4 10 12zM22 15c6-1 10 3 10 11H22c1-4 0-8-2-10z" /></svg></MeetIcon>
          <MeetLabel>Participants</MeetLabel>
          <Count>146</Count>
        </MeetItem>
        <CaretUp ml={11} />
        <MeetItem $w={60} $ml={38}>
          <MeetIcon><svg width="30" height="30" viewBox="0 0 30 30" fill="#8f8f8f"><path d="M1 6c0-2 1-3 3-3h20c2 0 3 1 3 3v14c0 2-1 3-3 3H14l-7 6v-6H4c-2 0-3-1-3-3z" /></svg></MeetIcon>
          <MeetLabel>Chat</MeetLabel>
          <ChatBadge>5</ChatBadge>
        </MeetItem>
        <CaretUp ml={5} />
        <MeetItem $w={100} $ml={22}>
          <MeetIcon><svg width="30" height="24" viewBox="0 0 30 24"><rect width="30" height="24" rx="3" fill="#23d25a" /><path d="M15 19V6M10 11l5-5 5 5" fill="none" stroke="#0d2a15" strokeWidth="2" /></svg></MeetIcon>
          <MeetLabel $green>Share Screen</MeetLabel>
        </MeetItem>
        <MeetItem $w={84} $ml={20}>
          <MeetIcon><svg width="30" height="32" viewBox="0 0 30 32"><circle cx="12" cy="18" r="12" fill="#a5a5a5" /><circle cx="8" cy="15" r="1.600" fill="#222" /><circle cx="16" cy="15" r="1.600" fill="#222" /><path d="M6 20c2 4 10 4 12 0" fill="none" stroke="#222" strokeWidth="1.500" /><path d="M24 5h6M27 2v6" stroke="#bbb" strokeWidth="1.300" /></svg></MeetIcon>
          <MeetLabel>Reactions</MeetLabel>
        </MeetItem>
        <MeetItem $w={50} $ml={33}>
          <MeetIcon><svg width="24" height="28" viewBox="0 0 24 28" fill="none" stroke="#aaa" strokeWidth="1.600"><circle cx="18" cy="5" r="3" /><circle cx="5" cy="23" r="3.200" /><path d="M12 3H6C3 3 2 4 2 7v7M22 13v7c0 3-1 4-4 4h-6" /></svg></MeetIcon>
          <MeetLabel>Apps</MeetLabel>
        </MeetItem>
        <LeaveBtn>Leave</LeaveBtn>
      </MeetBar>

      <ShieldBadge>
        <svg width="16" height="19" viewBox="0 0 16 19"><path d="M8 0l8 3v7c0 4-3 7-8 9-5-2-8-5-8-9V3z" fill="#2bd060" /><path d="M4 9l3 3 5-6" fill="none" stroke="#12351f" strokeWidth="1.800" /></svg>
      </ShieldBadge>
      <Banner>
        <BannerMsg>You are viewing Sudhakar Sharma's screen</BannerMsg>
        <BannerOptions>View Options <Chevron c="#fff" w={9} /></BannerOptions>
      </Banner>
      <ViewBadge>
        <svg width="13" height="16" viewBox="0 0 13 16" fill="#fff"><rect width="4" height="3" /><rect x="4.500" width="4" height="3" /><rect x="9" width="4" height="3" /><rect y="4" width="13" height="12" /></svg>
        <span style={{ position: "relative" }}>View</span>
        <svg style={{ marginLeft: -32 }} width="22" height="22" viewBox="0 0 22 22" stroke="#fff"><path d="M3 2l16 18M19 2 3 20" /></svg>
      </ViewBadge>
      <RingWrap width="28" height="28" viewBox="0 0 28 28" fill="none" strokeWidth="5">
        <circle cx="14" cy="14" r="11" stroke="#1ca8f1" />
        <path d="M4.500 19.500A11 11 0 0 0 23.500 19.500" stroke="#2b6fd8" />
      </RingWrap>
    </Page>
  );
}
